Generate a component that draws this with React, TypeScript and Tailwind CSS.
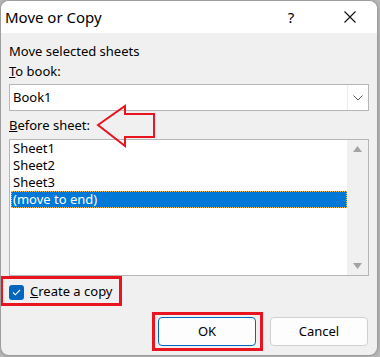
import React, { useState } from 'react';

const font = { fontFamily: '"Segoe UI", "Noto Sans", "Liberation Sans", sans-serif' };

const sheets = ['Sheet1', 'Sheet2', 'Sheet3', '(move to end)'];

const App: React.FC = () => {
    const [selected, setSelected] = useState(3);
    const [copy, setCopy] = useState(true);

    return (
        <div className="w-[380px] h-[357px] bg-[#b9b9b9] pl-[1px] pt-[1px] overflow-hidden" style={font}>
            <div className="w-[376px] h-[354px] bg-[#f0f0f0] rounded-[8px] overflow-hidden shadow-[0_0_4px_rgba(0,0,0,0.35)] flex flex-col text-[13px] text-black">
                {/* title bar */}
                <div className="h-[32px] bg-white flex items-center shrink-0">
                    <span className="pl-[4px] text-[15px] flex-1">Move or Copy</span>
                    <span className="w-[46px] text-center text-[15px] mr-[13px]">?</span>
                    <span className="w-[46px] h-[32px] flex items-center justify-center mr-[4px]">
                        <svg width="12" height="12" viewBox="0 0 12 12">
                            <path d="M0.5 0.5 L11.5 11.5 M11.5 0.5 L0.5 11.5" stroke="#111" strokeWidth="1.1" />
                        </svg>
                    </span>
                </div>

                <div className="flex flex-col px-[8px] pt-[10px]">
                    <div className="leading-[16px]">Move selected sheets</div>
                    <div className="leading-[16px] mt-[4px]"><span className="underline">T</span>o book:</div>

                    {/* combobox */}
                    <div className="mt-[5px] h-[27px] bg-white border border-[#b5b5b5] flex items-center">
                        <span className="flex-1 pl-[3px]">Book1</span>
                        <span className="w-[21px] h-[25px] border-l border-[#ececec] flex items-center justify-center">
                            <svg width="10" height="6" viewBox="0 0 10 6">
                                <path d="M0.5 0.5 L5 5 L9.5 0.5" fill="none" stroke="#555" strokeWidth="1" />
                            </svg>
                        </span>
                    </div>

                    <div className="relative leading-[16px] mt-[6px]">
                        <span className="underline">B</span>efore sheet:
                        <svg className="absolute left-[87px] top-[-13px]" width="62" height="46" viewBox="0 0 62 46">
                            <polygon points="2,21 29,2 29,10 58,10 58,33 29,33 29,42" fill="none" stroke="#e8141f" strokeWidth="2" />
                        </svg>
                    </div>

                    {/* listbox */}
                    <div className="mt-[6px] h-[137px] bg-white border border-[#b5b5b5] flex">
                        <div className="flex-1 pl-[1px] pt-[0px]">
                            {sheets.map((s, i) => (
                                <div
                                    key={s}
                                    onClick={() => setSelected(i)}
                                    className={`h-[17px] leading-[17px] pl-[2px] ${i === selected ? 'bg-[#0078d7] text-white outline-1 outline-dotted outline-offset-[-1px] outline-[#f0c060]' : ''}`}
                                >
                                    {s}
                                </div>
                            ))}
                        </div>
                        <div className="w-[21px] bg-[#f0f0f0] flex flex-col items-center justify-between py-[6px]">
                            <svg width="9" height="6" viewBox="0 0 9 6"><polygon points="4.5,0 9,6 0,6" fill="#a3a3a3" /></svg>
                            <svg width="9" height="6" viewBox="0 0 9 6"><polygon points="0,0 9,0 4.5,6" fill="#a3a3a3" /></svg>
                        </div>
                    </div>

                    {/* checkbox */}
                    <div className="relative mt-[8px] h-[16px] flex items-center" onClick={() => setCopy(!copy)}>
                        <span className={`w-[15px] h-[15px] rounded-[3px] flex items-center justify-center ${copy ? 'bg-[#0067c0]' : 'bg-white border border-[#555]'}`}>
                            {copy && (
                                <svg width="9" height="7" viewBox="0 0 9 7">
                                    <path d="M1 3.5 L3.3 5.8 L8 1" fill="none" stroke="white" strokeWidth="1.1" />
                                </svg>
                            )}
                        </span>
                        <span className="ml-[6px]"><span className="underline">C</span>reate a copy</span>
                        <span className="absolute left-[-9px] top-[-8px] w-[122px] h-[30px] border-[3px] border-[#e8141f]" />
                    </div>

                    {/* buttons */}
                    <div className="flex justify-end gap-[14px] mt-[17px] pr-[1px]">
                        <div className="relative">
                            <button className="w-[98px] h-[29px] rounded-[4px] bg-[#fdfdfd] border border-[#0067c0] text-[13px]">OK</button>
                            <span className="absolute left-[-6px] top-[-5px] w-[111px] h-[39px] border-[3px] border-[#e8141f]" />
                        </div>
                        <button className="w-[98px] h-[29px] rounded-[4px] bg-[#fdfdfd] border border-[#d0d0d0] text-[13px]">Cancel</button>
                    </div>
                </div>
            </div>
        </div>
    );
};

export default App;
